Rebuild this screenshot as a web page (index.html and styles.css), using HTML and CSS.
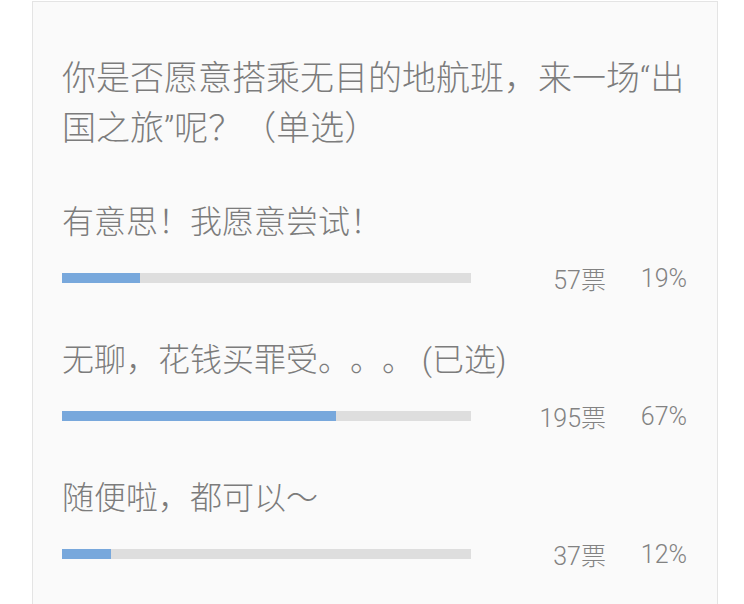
FILE: index.html
```html
<!DOCTYPE html>
<html>
	<head>
		<meta http-equiv="content-type" content="text/html;charset=UTF-8" />
		<link rel="stylesheet" href="styles.css">
	</head>

	<body>
		<div class="card">
			<div class="question">你是否愿意搭乘无目的地航班，来一场“出<br>国之旅”呢？（单选）</div>
			<div class="option">
				<div class="label">有意思！我愿意尝试！</div>
				<div class="result">
					<div class="bar"><div class="fill" style="width:19%"></div></div>
					<span class="count">57票</span>
					<span class="percent">19%</span>
				</div>
			</div>
			<div class="option">
				<div class="label">无聊，花钱买罪受。。。 (已选)</div>
				<div class="result">
					<div class="bar"><div class="fill" style="width:67%"></div></div>
					<span class="count">195票</span>
					<span class="percent">67%</span>
				</div>
			</div>
			<div class="option">
				<div class="label">随便啦，都可以～</div>
				<div class="result">
					<div class="bar"><div class="fill" style="width:12%"></div></div>
					<span class="count">37票</span>
					<span class="percent">12%</span>
				</div>
			</div>
		</div>
	</body>
</html>
```

FILE: styles.css
```css
body{
	margin: 0;
	background-color: #ffffff;
	font-family: "Roboto", "Noto Sans CJK SC", sans-serif;
	color: #7c7c7c;
	text-spacing-trim: space-all;
}
.card{
	box-sizing: border-box;
	width: 686px;
	min-height: 700px;
	margin: 1px 0 0 32px;
	padding: 51px 30px 0 29px;
	background-color: #fafafa;
	border: solid 1px #e4e4e4;
}
.question{
	font-size: 34px;
	line-height: 50px;
	font-weight: 300;
	white-space: nowrap;
}
.option{
	margin-top: 44px;
}
.option + .option{
	margin-top: 42px;
}
.label{
	font-size: 32px;
	line-height: 50px;
	font-weight: 300;
}
.result{
	margin-top: 16px;
	height: 30px;
	display: flex;
	flex-direction: row;
	align-items: center;
}
.bar{
	width: 409px;
	height: 10px;
	background-color: #dedede;
}
.fill{
	height: 100%;
	background-color: #78a8dc;
}
.count{
	margin-left: auto;
	font-size: 25px;
	font-weight: 300;
	color: #828282;
}
.percent{
	width: 50px;
	margin-left: 31px;
	text-align: right;
	font-size: 25px;
	font-weight: 300;
	color: #828282;
}
```
